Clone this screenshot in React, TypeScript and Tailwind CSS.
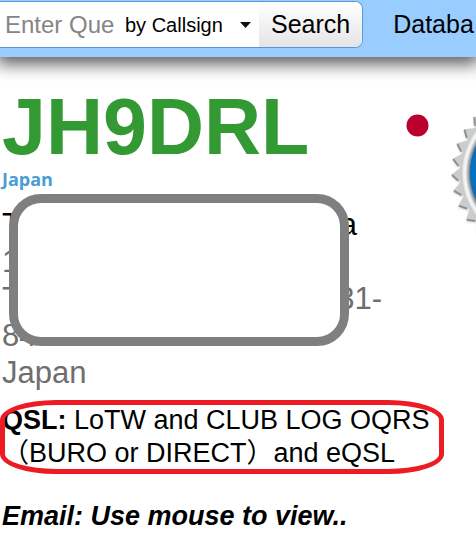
const SEAL_CENTER = 84;
const TEETH = 32;
const STEP = Math.PI / TEETH;
const START = Math.PI - 0.025;

const polar = (radius: number, angle: number) => {
  const x = SEAL_CENTER + radius * Math.cos(angle);
  const y = SEAL_CENTER + radius * Math.sin(angle);
  return `${x.toFixed(1)},${y.toFixed(1)}`;
};

const sealPoints = Array.from({ length: TEETH * 2 }, (_, i) =>
  polar(i % 2 === 0 ? 82 : 73, START + i * STEP)
).join(" ");

// Darker lower edge of each tooth
const toothShades = Array.from({ length: TEETH }, (_, i) => {
  const angle = START + i * 2 * STEP;
  return `M${polar(81, angle)}L${polar(75, angle - STEP * 0.8)}`;
}).join("");

const Seal = () => (
  <svg
    className="h-[168px] w-[168px] shrink-0"
    viewBox="0 0 168 168"
    aria-hidden="true"
  >
    <defs>
      <radialGradient id="ring" cx="50%" cy="50%" r="50%">
        <stop offset="88%" stopColor="#5f6a73" />
        <stop offset="92%" stopColor="#b4b7b9" />
        <stop offset="95%" stopColor="#f5f5f5" />
        <stop offset="98%" stopColor="#efefef" />
        <stop offset="100%" stopColor="#cfd0d1" />
      </radialGradient>
      <filter id="soft" x="-10%" y="-10%" width="120%" height="120%">
        <feDropShadow dx="0" dy="2" stdDeviation="1" floodOpacity="0.15" />
      </filter>
    </defs>
    <polygon points={sealPoints} fill="#cbcccd" filter="url(#soft)" />
    <path d={toothShades} stroke="#8d9092" strokeWidth="2" />
    <circle cx="84" cy="84" r="71" fill="url(#ring)" />
    <circle cx="84" cy="84" r="63" fill="#0870bd" />
  </svg>
);

const Header = () => (
  <header className="relative flex h-[57px] items-start bg-[#99ccff] shadow-[0_4px_16px_3px_rgba(0,0,0,0.65)]">
    <form
      className="mt-px flex h-[47px] shrink-0 overflow-hidden rounded-r-lg border-y border-r border-[#5b97d3] bg-white"
      onSubmit={(e) => e.preventDefault()}
    >
      <input
        type="text"
        aria-label="Enter query"
        placeholder="Enter Que"
        className="w-[121px] pl-[5px] text-2xl text-black outline-none placeholder:text-[#858585]"
      />
      <div className="relative flex w-[138px] items-center">
        <select
          aria-label="Search type"
          className="h-full w-full appearance-none bg-transparent pl-1 text-xl outline-none"
        >
          <option>by Callsign</option>
        </select>
        <svg
          className="pointer-events-none absolute right-2 h-[6px] w-[11px]"
          viewBox="0 0 11 6"
          aria-hidden="true"
        >
          <path d="M0 0h11L5.5 6z" fill="#111" />
        </svg>
      </div>
      <button
        type="submit"
        className="bg-linear-to-b from-white to-[#e5e5e5] px-3 text-[25px]"
      >
        Search
      </button>
    </form>
    <a href="#database" className="ml-[30px] shrink-0 pt-1.5 text-[25px]">
      Databa
    </a>
  </header>
);

const Address = () => (
  <address className="relative text-[31px] leading-[37px] text-[#6e6e6e] not-italic">
    <p className="flex w-[355px] justify-between text-black">
      <span>T</span>
      <span>a</span>
    </p>
    <p>1</p>
    <p className="flex justify-between">
      <span>T</span>
      <span>31-</span>
    </p>
    <p>84</p>
    <p>Japan</p>
    <div className="absolute -top-3 left-[7px] h-[152px] w-[340px] rounded-[32px] border-9 border-[#7f7f7f] bg-white" />
  </address>
);

export default function App() {
  return (
    <div className="overflow-hidden bg-white font-['Liberation_Sans','Noto_Sans_CJK_JP',sans-serif] text-black">
      <Header />
      <main className="pt-7 pl-0.5">
        <section className="flex items-start">
          <div className="w-[380px] shrink-0">
            <h1 className="text-[79px] leading-[84px] font-bold text-[#339933]">
              JH9DRL
            </h1>
            <a
              href="#japan"
              className="block font-['Open_Sans',sans-serif] text-lg leading-5 font-bold text-[#4a9dd4]"
            >
              Japan
            </a>
            <div className="pt-[17px]">
              <Address />
            </div>
          </div>
          <svg
            className="mt-[29px] ml-6 h-[23px] w-[23px] shrink-0"
            viewBox="0 0 23 23"
            role="img"
            aria-label="Flag of Japan"
          >
            <circle cx="11.5" cy="11.5" r="11" fill="#bc002d" />
          </svg>
          <div className="mt-1 ml-5">
            <Seal />
          </div>
        </section>

        <section className="relative mt-[13px] text-[27px] leading-[33px]">
          <p>
            <b>QSL:</b> LoTW and CLUB LOG OQRS
            <br />
            （BURO or DIRECT）and eQSL
          </p>
          <div className="absolute -top-1 -left-0.5 h-[74px] w-[444px] rounded-[56px/20px] border-5 border-[#ed1c24]" />
        </section>

        <p className="mt-[30px] pb-1 text-[27px] leading-[33px] font-bold italic">
          Email: Use mouse to view..
        </p>
      </main>
    </div>
  );
}
